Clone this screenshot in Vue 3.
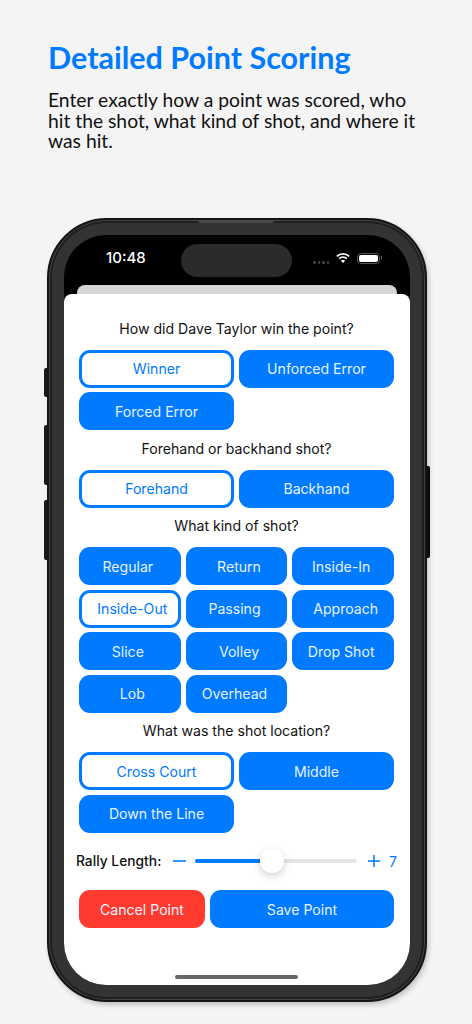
<template>
  <div class="page">
    <h1>Detailed Point Scoring</h1>
    <p class="lead">Enter exactly how a point was scored, who hit the shot, what kind of shot, and where it was hit.</p>

    <div class="phone">
      <span class="side vol-switch"></span>
      <span class="side vol-up"></span>
      <span class="side vol-down"></span>
      <span class="side power"></span>
      <span class="speaker"></span>

      <div class="screen">
        <div class="status">
          <span class="time">10:48</span>
          <span class="island"></span>
          <div class="status-icons">
            <span class="dots"><i></i><i></i><i></i><i></i></span>
            <svg width="14" height="10" viewBox="0 0 14 10">
              <path d="M.9 3.4a8.8 8.8 0 0 1 12.2 0" fill="none" stroke="#fff" stroke-width="1.7" />
              <path d="M3.2 5.6a5.5 5.5 0 0 1 7.6 0" fill="none" stroke="#fff" stroke-width="1.7" />
              <path d="M7 10 4.9 7.8a3 3 0 0 1 4.2 0z" fill="#fff" />
            </svg>
            <span class="battery"><b></b></span>
          </div>
        </div>

        <div class="peek"></div>

        <div class="sheet">
          <template v-for="group in groups" :key="group.question">
            <div class="question">{{ group.question }}</div>
            <div class="options" :class="group.cols === 3 ? 'three' : 'two'">
              <button
                v-for="opt in group.options"
                :key="opt.label"
                :class="[opt.shift, { selected: opt.selected }]"
              >{{ opt.label }}</button>
            </div>
          </template>

          <div class="rally">
            <span class="rally-label">Rally Length:</span>
            <span class="minus"></span>
            <div class="track">
              <div class="fill"></div>
              <div class="thumb"></div>
            </div>
            <svg class="plus" width="14" height="14" viewBox="0 0 14 14">
              <path d="M7 1v12M1 7h12" stroke="#007aff" stroke-width="1.5" fill="none" />
            </svg>
            <span class="rally-value">7</span>
          </div>

          <div class="actions">
            <button class="cancel">Cancel Point</button>
            <button class="save">Save Point</button>
          </div>

          <div class="home-bar"></div>
        </div>
      </div>
    </div>
  </div>
</template>

<script setup>
const groups = [
  {
    question: 'How did Dave Taylor win the point?',
    cols: 2,
    options: [
      { label: 'Winner', selected: true },
      { label: 'Unforced Error' },
      { label: 'Forced Error' },
    ],
  },
  {
    question: 'Forehand or backhand shot?',
    cols: 2,
    options: [{ label: 'Forehand', selected: true }, { label: 'Backhand' }],
  },
  {
    question: 'What kind of shot?',
    cols: 3,
    options: [
      { label: 'Regular', shift: 'left' },
      { label: 'Return', shift: 'right' },
      { label: 'Inside-In', shift: 'left' },
      { label: 'Inside-Out', selected: true, shift: 'right' },
      { label: 'Passing', shift: 'left' },
      { label: 'Approach', shift: 'right' },
      { label: 'Slice', shift: 'left' },
      { label: 'Volley', shift: 'right' },
      { label: 'Drop Shot', shift: 'left' },
      { label: 'Lob', shift: 'right' },
      { label: 'Overhead', shift: 'left' },
    ],
  },
  {
    question: 'What was the shot location?',
    cols: 2,
    options: [
      { label: 'Cross Court', selected: true },
      { label: 'Middle' },
      { label: 'Down the Line' },
    ],
  },
]
</script>

<style>
html,
body {
  margin: 0;
  background: #f4f4f4;
}
</style>

<style scoped>
.page {
  height: 1024px;
  overflow: hidden;
  padding: 40px 0 0 48px;
  box-sizing: border-box;
  background: #f4f4f4;
}
h1 {
  margin: 0;
  font: 700 30.5px/34px Lato, sans-serif;
  color: #007aff;
}
.lead {
  margin: 16px 0 0;
  width: 380px;
  font: 400 19.3px/20.5px Lato, sans-serif;
  color: #111;
}
.phone {
  position: relative;
  width: 380px;
  height: 784px;
  margin: 66.5px 0 0 -1px;
  padding: 15px;
  box-sizing: border-box;
  background: #333;
  border: 2px solid #151515;
  border-radius: 60px;
  box-shadow: 2px 3px 5px rgba(0, 0, 0, 0.2), inset 0 0 0 1px #444, inset 0 0 0 3px #1f1f1f;
}
.side {
  position: absolute;
  width: 3px;
  background: #1a1a1a;
}
.vol-switch { left: -5px; top: 148px; height: 29px; border-radius: 2px 0 0 2px; }
.vol-up { left: -5px; top: 205px; height: 60px; border-radius: 2px 0 0 2px; }
.vol-down { left: -5px; top: 280px; height: 60px; border-radius: 2px 0 0 2px; }
.power { right: -5px; top: 246px; height: 92px; background: #0c0c0c; border-radius: 0 2px 2px 0; }
.speaker {
  position: absolute;
  top: 0;
  left: 149px;
  width: 76px;
  height: 3px;
  background: #4a4a4a;
  border-radius: 0 0 3px 3px;
}
.screen {
  display: flex;
  flex-direction: column;
  height: 100%;
  background: #000;
  border-radius: 42px;
  overflow: hidden;
}
.status {
  position: relative;
  flex: none;
  height: 49.5px;
  font-family: Inter, sans-serif;
}
.time {
  position: absolute;
  left: 42px;
  top: 14px;
  font-size: 15px;
  font-weight: 500;
  line-height: 18px;
  color: #fff;
}
.island {
  position: absolute;
  left: 117px;
  top: 8.5px;
  width: 111px;
  height: 33px;
  background: #2b2b2d;
  border-radius: 17px;
}
.status-icons {
  position: absolute;
  right: 29px;
  top: 18px;
  display: flex;
  align-items: flex-start;
  gap: 7px;
}
.dots {
  display: flex;
  gap: 2px;
  margin-top: 8px;
}
.dots i {
  width: 2.5px;
  height: 2.5px;
  border-radius: 50%;
  background: #444;
}
.battery {
  position: relative;
  display: block;
  width: 23px;
  height: 11px;
  margin-right: 1px;
  padding: 1px;
  box-sizing: border-box;
  border: 1px solid #555;
  border-radius: 4px;
}
.battery::after {
  content: '';
  position: absolute;
  right: -3px;
  top: 2px;
  width: 1px;
  height: 4px;
  background: #555;
}
.battery b {
  display: block;
  height: 100%;
  background: #fff;
  border-radius: 2px;
}
.peek {
  flex: none;
  height: 9px;
  margin: 0 13px;
  background: #d6d6d8;
  border-radius: 8px 8px 0 0;
}
.sheet {
  position: relative;
  flex: 1;
  padding: 0 16px 0 15px;
  background: #fff;
  border-radius: 8px 8px 0 0;
  font-family: Inter, sans-serif;
}
.question {
  height: 21px;
  padding-top: 24px;
  font-size: 14.1px;
  line-height: 21px;
  text-align: center;
  color: #111;
}
.options + .question {
  padding-top: 7.5px;
}
.options {
  display: grid;
  gap: 4.5px 5px;
  margin-top: 11px;
}
.two { grid-template-columns: repeat(2, 1fr); }
.three { grid-template-columns: repeat(3, 1fr); }
button {
  height: 38px;
  padding: 0;
  border: none;
  border-radius: 11px;
  background: #007aff;
  color: #e8f2ff;
  font-family: Inter, sans-serif;
  font-size: 14.1px;
}
button.selected {
  background: #fff;
  border: 3px solid #007aff;
  color: #007aff;
}
button.right {
  padding-left: 5px;
}
button.left {
  padding-right: 4px;
}
.rally {
  display: flex;
  align-items: center;
  height: 20px;
  margin: 18.5px 0 0 -3px;
}
.rally > * {
  flex: none;
}
.rally-label {
  width: 97px;
  font-size: 13.8px;
  font-weight: 500;
  white-space: nowrap;
  color: #111;
}
.minus {
  width: 13px;
  height: 1.5px;
  background: #3a94ff;
}
.track {
  position: relative;
  width: 162px;
  height: 4px;
  margin: 0 10px 0 9px;
  background: #e5e5e5;
  border-radius: 2px;
}
.fill {
  width: 66px;
  height: 100%;
  background: #007aff;
  border-radius: 2px;
}
.thumb {
  position: absolute;
  left: 65px;
  top: -10px;
  width: 24px;
  height: 24px;
  border-radius: 50%;
  background: #fff;
  box-shadow: 0 3px 8px rgba(0, 0, 0, 0.18);
}
.rally-value {
  margin-left: 8px;
  font-size: 14px;
  color: #007aff;
}
.actions {
  display: grid;
  grid-template-columns: 126px 1fr;
  gap: 5px;
  margin-top: 19px;
}
.cancel {
  background: #ff3b30;
}
.home-bar {
  position: absolute;
  left: 111px;
  bottom: 6px;
  width: 123px;
  height: 4px;
  background: #666;
  border-radius: 2px;
}
</style>
